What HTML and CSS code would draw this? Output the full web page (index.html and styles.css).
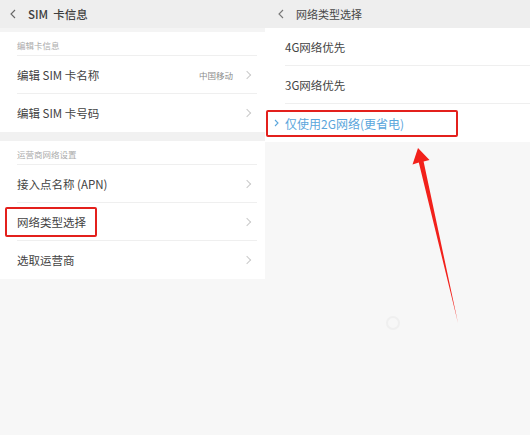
FILE: index.html
```html
<!DOCTYPE html>
<html lang="zh">
<head>
<meta charset="utf-8">
<link rel="stylesheet" href="styles.css">
</head>
<body>
<div class="page">
  <section class="panel left">
    <header class="bar">
      <svg class="back" width="6" height="10" viewBox="0 0 6 10"><path d="M5 1L1 5l4 4" fill="none" stroke="#666" stroke-width="1.1"/></svg>
      <span class="title">SIM&nbsp;&nbsp;卡信息</span>
    </header>
    <div class="strip"></div>
    <div class="card">
      <div class="label">编辑卡信息</div>
      <div class="row"><span class="txt">编辑 SIM 卡名称</span><span class="val">中国移动</span><span class="chev"></span></div>
      <div class="row last"><span class="txt">编辑 SIM 卡号码</span><span class="chev"></span></div>
    </div>
    <div class="gap"></div>
    <div class="card">
      <div class="label">运营商网络设置</div>
      <div class="row"><span class="txt">接入点名称 (APN)</span><span class="chev"></span></div>
      <div class="row"><span class="txt">网络类型选择</span><span class="chev"></span></div>
      <div class="row last"><span class="txt">选取运营商</span><span class="chev"></span></div>
    </div>
    <div class="mark mark-left"></div>
  </section>
  <section class="panel right">
    <header class="bar bar-right">
      <svg class="back" width="6" height="10" viewBox="0 0 6 10"><path d="M5 1L1 5l4 4" fill="none" stroke="#777" stroke-width="1.1"/></svg>
      <span class="title small">网络类型选择</span>
    </header>
    <div class="list">
      <div class="opt">4G网络优先</div>
      <div class="opt">3G网络优先</div>
      <div class="opt sel"><svg class="selchev" width="5" height="8" viewBox="0 0 5 8"><path d="M1 1l3 3-3 3" fill="none" stroke="#5aa6dc" stroke-width="1.1"/></svg>仅使用2G网络(更省电)</div>
    </div>
    <div class="mark mark-right"></div>
    <div class="dot"></div>
  </section>
  <svg class="arrow" width="530" height="435" viewBox="0 0 530 435">
    <path d="M418 148 L429.5 160 L423.6 161.4 L458 323 L418.8 162.6 L412.5 164.5 Z" fill="#f2211b"/>
  </svg>
</div>
</body>
</html>
```
FILE: styles.css
```css
html, body {
  margin: 0;
  padding: 0;
  background: #f7f7f7;
}
body {
  font-family: "Noto Sans CJK SC", "Noto Sans", sans-serif;
  color: #444;
}
.page {
  position: relative;
  width: 530px;
  height: 435px;
  display: grid;
  grid-template-columns: 265px 265px;
  overflow: hidden;
  background: #f7f7f7;
}
.panel {
  position: relative;
  display: flex;
  flex-direction: column;
}
.bar {
  height: 28px;
  background: #eeeeee;
  display: flex;
  align-items: center;
  padding-left: 10px;
  gap: 12px;
}
.bar-right {
  padding-left: 13px;
}
.title {
  font-size: 11.5px;
  font-weight: 500;
  color: #3e3e3e;
}
.title.small {
  font-size: 11px;
  font-weight: 400;
  color: #474747;
}
.strip {
  height: 4px;
  background: #f4f4f4;
}
.card {
  background: #fff;
}
.label {
  height: 24px;
  margin-left: 17px;
  margin-right: 8px;
  border-bottom: 1px solid #efefef;
  box-sizing: border-box;
  font-size: 8.5px;
  color: #ababab;
  display: flex;
  align-items: center;
  padding-top: 2px;
}
.row {
  height: 38px;
  margin-left: 17px;
  margin-right: 8px;
  box-sizing: border-box;
  border-bottom: 1px solid #efefef;
  display: flex;
  align-items: center;
}
.row.last {
  border-bottom: none;
}
.txt {
  font-size: 11.5px;
  color: #424242;
  flex: 1;
}
.val {
  font-size: 8.5px;
  color: #8c8c8c;
  margin-right: 11px;
}
.chev {
  width: 5px;
  height: 5px;
  border-top: 1px solid #cacaca;
  border-right: 1px solid #cacaca;
  transform: rotate(45deg);
  margin-right: 7px;
}
.gap {
  height: 9px;
  background: #f1f1f1;
}
.list {
  background: #fff;
}
.opt {
  height: 38px;
  margin-left: 20px;
  box-sizing: border-box;
  border-bottom: 1px solid #efefef;
  display: flex;
  align-items: center;
  font-size: 11.5px;
  color: #424242;
}
.opt.sel {
  margin-left: 0;
  padding-left: 9px;
  border-bottom: none;
  color: #5aa6dc;
  font-size: 12px;
  gap: 6px;
}
.mark {
  position: absolute;
  border: 2px solid #e3201c;
  border-radius: 2px;
  box-sizing: border-box;
}
.mark-left {
  left: 5px;
  top: 207px;
  width: 92px;
  height: 30px;
}
.mark-right {
  left: 1px;
  top: 110px;
  width: 192px;
  height: 27px;
}
.dot {
  position: absolute;
  left: 121px;
  top: 316px;
  width: 14px;
  height: 14px;
  border-radius: 50%;
  border: 2px solid #efefef;
  box-sizing: border-box;
}
.arrow {
  position: absolute;
  left: 0;
  top: 0;
  pointer-events: none;
}
```
